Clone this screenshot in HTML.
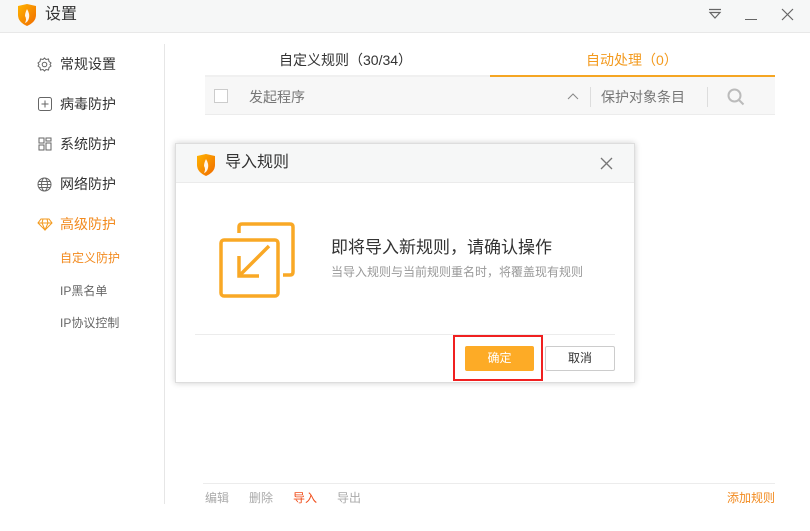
<!DOCTYPE html>
<html><head><meta charset="utf-8"><style>
*{margin:0;padding:0;box-sizing:border-box}
body{width:810px;height:531px;background:#fff;font-family:"Liberation Sans","Noto Sans CJK SC",sans-serif;position:relative;overflow:hidden;color:#333}
.abs{position:absolute}
.t{position:absolute;white-space:nowrap;line-height:1.2}
</style></head><body>
<div class="abs" style="left:0;top:0;width:810px;height:33px;background:#f6f7f7;border-bottom:1px solid #e8e8e8"></div>
<svg class="abs" style="left:17px;top:3px" width="20" height="24" viewBox="0 0 20 24"><defs><linearGradient id="g" x1="0" y1="0" x2="1" y2="1"><stop offset="0" stop-color="#ffb400"/><stop offset="1" stop-color="#f06a00"/></linearGradient></defs><path d="M1 3 L10 1 L19 3 L19 12 Q19 19 10 23 Q1 19 1 12Z" fill="url(#g)"/><path d="M10 6 Q13 11 12 15 Q11 19 8 20 Q10 16 8 13 Q8 10 10 6Z" fill="#fff" opacity=".9"/></svg>
<div class="t" style="left:45px;top:5px;font-size:16px;color:#333">设置</div>
<svg class="abs" style="left:708px;top:8px" width="14" height="12"><path d="M1 1.5H13M2 4.5H12L7 10Z" stroke="#666" fill="none" stroke-width="1.2"/></svg>
<div class="abs" style="left:745px;top:19px;width:12px;height:1.3px;background:#666"></div>
<svg class="abs" style="left:781px;top:8px" width="13" height="13"><path d="M1 1L12 12M12 1L1 12" stroke="#666" stroke-width="1.2"/></svg>

<div class="abs" style="left:164px;top:44px;width:1px;height:460px;background:#e6e6e6"></div>
<svg class="abs" style="left:37px;top:57px" width="15" height="15" viewBox="0 0 15 15"><circle cx="7.5" cy="7.5" r="2.3" fill="none" stroke="#666"/><path d="M7.5 1 L9 2.5 L11.5 2 L12 4.5 L14 6 L13 7.5 L14 9 L12 10.5 L11.5 13 L9 12.5 L7.5 14 L6 12.5 L3.5 13 L3 10.5 L1 9 L2 7.5 L1 6 L3 4.5 L3.5 2 L6 2.5Z" fill="none" stroke="#666"/></svg>
<div class="t" style="left:60px;top:56px;font-size:14px">常规设置</div>
<svg class="abs" style="left:38px;top:97px" width="14" height="14"><rect x=".5" y=".5" width="13" height="13" rx="2" fill="none" stroke="#666"/><path d="M7 3.5V10.5M3.5 7H10.5" stroke="#666"/></svg>
<div class="t" style="left:60px;top:96px;font-size:14px">病毒防护</div>
<svg class="abs" style="left:38px;top:137px" width="14" height="14"><path d="M1 1h5v5h-5zM8 1h5v3h-5zM1 8h5v5h-5zM8 6h5v7h-5z" fill="none" stroke="#666"/></svg>
<div class="t" style="left:60px;top:136px;font-size:14px">系统防护</div>
<svg class="abs" style="left:37px;top:177px" width="15" height="15"><circle cx="7.5" cy="7.5" r="6.5" fill="none" stroke="#666"/><ellipse cx="7.5" cy="7.5" rx="3" ry="6.5" fill="none" stroke="#666"/><path d="M1 7.5H14M2 4.5H13M2 10.5H13" stroke="#666"/></svg>
<div class="t" style="left:60px;top:176px;font-size:14px">网络防护</div>
<svg class="abs" style="left:37px;top:218px" width="16" height="13"><path d="M4 1H12L15 5L8 12L1 5Z M1 5H15 M6 1L5 5L8 12L11 5L10 1" fill="none" stroke="#f39a1e"/></svg>
<div class="t" style="left:60px;top:216px;font-size:14px;color:#f28a1e">高级防护</div>
<div class="t" style="left:60px;top:251px;font-size:12px;color:#f28a1e">自定义防护</div>
<div class="t" style="left:60px;top:284px;font-size:12px;color:#666">IP黑名单</div>
<div class="t" style="left:60px;top:316px;font-size:12px;color:#666">IP协议控制</div>

<div class="t" style="left:279px;top:52px;font-size:14px;color:#333">自定义规则（30/34）</div>
<div class="t" style="left:586px;top:52px;font-size:14px;color:#f39a1e">自动处理（0）</div>
<div class="abs" style="left:205px;top:75px;width:285px;height:2px;background:#f0f0f0"></div>
<div class="abs" style="left:490px;top:75px;width:285px;height:2px;background:#f5a623"></div>
<div class="abs" style="left:205px;top:77px;width:570px;height:38px;background:#f7f7f7;border-bottom:1px solid #ececec"></div>
<div class="abs" style="left:214px;top:89px;width:14px;height:14px;border:1px solid #ccc;background:#fff"></div>
<div class="t" style="left:249px;top:89px;font-size:14px;color:#777">发起程序</div>
<svg class="abs" style="left:567px;top:92px" width="12" height="8"><path d="M1 7L6 2L11 7" fill="none" stroke="#888"/></svg>
<div class="abs" style="left:590px;top:87px;width:1px;height:20px;background:#ddd"></div>
<div class="t" style="left:601px;top:89px;font-size:14px;color:#777">保护对象条目</div>
<div class="abs" style="left:707px;top:87px;width:1px;height:20px;background:#ddd"></div>
<svg class="abs" style="left:727px;top:88px" width="18" height="18"><circle cx="7.5" cy="7.5" r="6" fill="none" stroke="#bbb" stroke-width="2"/><path d="M12 12L16.5 16.5" stroke="#bbb" stroke-width="2"/></svg>

<div class="abs" style="left:203px;top:483px;width:572px;height:1px;background:#ececec"></div>
<div class="t" style="left:205px;top:491px;font-size:12px;color:#aaa">编辑</div>
<div class="t" style="left:249px;top:491px;font-size:12px;color:#aaa">删除</div>
<div class="t" style="left:293px;top:491px;font-size:12px;color:#f0501e">导入</div>
<div class="t" style="left:337px;top:491px;font-size:12px;color:#aaa">导出</div>
<div class="t" style="left:727px;top:491px;font-size:12px;color:#f28a1e">添加规则</div>

<div class="abs" style="left:175px;top:143px;width:460px;height:240px;background:#fff;border:1px solid #ddd;box-shadow:0 0 6px rgba(0,0,0,.2)"></div>
<div class="abs" style="left:176px;top:144px;width:458px;height:39px;background:#f6f7f7;border-bottom:1px solid #ebebeb"></div>
<svg class="abs" style="left:196px;top:153px" width="20" height="24" viewBox="0 0 20 24"><path d="M1 3 L10 1 L19 3 L19 12 Q19 19 10 23 Q1 19 1 12Z" fill="url(#g)"/><path d="M10 6 Q13 11 12 15 Q11 19 8 20 Q10 16 8 13 Q8 10 10 6Z" fill="#fff" opacity=".9"/></svg>
<div class="t" style="left:225px;top:153px;font-size:16px;color:#333">导入规则</div>
<svg class="abs" style="left:600px;top:157px" width="13" height="13"><path d="M1 1L12 12M12 1L1 12" stroke="#777" stroke-width="1.3"/></svg>
<svg class="abs" style="left:219px;top:222px" width="76" height="76" viewBox="0 0 76 76"><path d="M20 11V5Q20 2 23 2H71Q74 2 74 5V50Q74 53 71 53H64" fill="none" stroke="#f9a825" stroke-width="3.5"/><rect x="2" y="18" width="57" height="56" rx="3" fill="none" stroke="#f9a825" stroke-width="3.5"/><path d="M50 24L20 54M20 34V54H40" fill="none" stroke="#f9a825" stroke-width="3.5"/></svg>
<div class="t" style="left:331px;top:238px;font-size:17px;color:#333">即将导入新规则，请确认操作</div>
<div class="t" style="left:331px;top:265px;font-size:12px;color:#999">当导入规则与当前规则重名时，将覆盖现有规则</div>
<div class="abs" style="left:195px;top:334px;width:420px;height:1px;background:#ececec"></div>
<div class="abs" style="left:465px;top:346px;width:69px;height:25px;background:#fdab26;border-radius:2px;color:#fff;font-size:12px;text-align:center;line-height:25px">确定</div>
<div class="abs" style="left:453px;top:335px;width:90px;height:46px;border:2px solid #f02020"></div>
<div class="abs" style="left:545px;top:346px;width:70px;height:25px;border:1px solid #ccc;border-radius:2px;font-size:12px;text-align:center;line-height:23px;color:#333">取消</div>
</body></html>
